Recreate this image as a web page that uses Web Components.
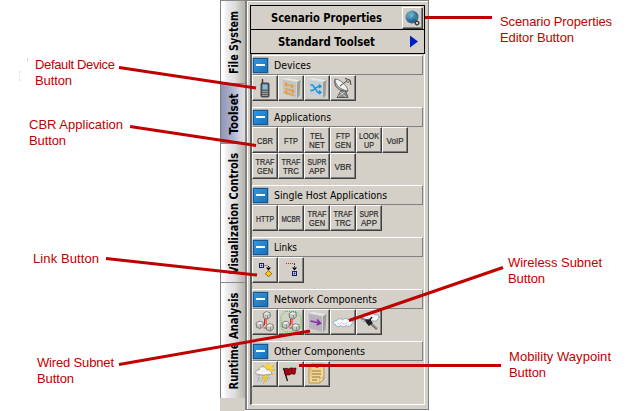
<!DOCTYPE html>
<html lang="en">
<head>
<meta charset="utf-8">
<title>Scenario toolset</title>
<style>
html,body{margin:0;background:#fff;width:641px;height:411px;overflow:hidden;font-family:"Liberation Sans",Arial,sans-serif}
</style>
</head>
<body>
<toolset-guide></toolset-guide>
<script>
const make = (name, render) => customElements.define(name, class extends HTMLElement {
  connectedCallback() {
    if (!this.shadowRoot) this.attachShadow({mode: 'open'}).innerHTML = render(this);
  }
});

// Text fitted to a measured run length
make('fit-text', e => {
  const w = +e.getAttribute('w'), s = e.getAttribute('size') || 11;
  return `<style>:host{display:block;width:${w}px;height:16px;flex:none}svg{display:block;overflow:visible}
  text{font:${e.getAttribute('weight') || 'normal'} ${s}px "DejaVu Sans Condensed","DejaVu Sans",sans-serif;font-stretch:condensed;fill:#000}</style>
  <svg width="${w}" height="16"><text y="12" textLength="${w}" lengthAdjust="spacingAndGlyphs">${e.getAttribute('text')}</text></svg>`;
});

const host = (x, y, k = 1) => `<g transform="translate(${x} ${y}) scale(${k})"><path d="M0 2.2L3 .2 7 1.2 7.400 5 4.800 7.600 .6 6.400Z" fill="#c4c4c1" stroke="#666" stroke-width=".8"/><path d="M.6 2.400L4.500 3.200 7 1.400 3.200.7Z" fill="#eee"/><path d="M4.500 3.200V7" stroke="#777" stroke-width=".7"/></g>`;
const cluster = `<path d="M14 10v4.500l2 2M12.500 10v6l-1.500 1M11.500 19h3" fill="none" stroke="#d22" stroke-width="1"/>${host(11,2.5)}${host(4,12)}${host(14,14.5)}`;
const box = (c, p) => `<path d="M4 4L8 2.500 22.500 5 21.500 20.500 18.500 24 4.500 19.500Z" fill="#9d9d9a"/><path d="M4 4L8 2.500 22.500 5 19 7Z" fill="#e6e6e3"/><path d="M4 4L18.500 7V23.500L4.500 19.500Z" fill="${c}" stroke="#e2e2df" stroke-width=".7"/>${p}`;
const cloud = (x, y) => `<path transform="translate(${x} ${y})" d="M3 6C0 5 0 2 4 2.300 5-.5 9 0 10 1.500 12-.7 15-.2 16 1.500 20 0 22 4 19 5.500 19 8 15 8 14 7 12 9 9 8.500 8 7 6 9 3 8 3 6Z" fill="#f8faff" stroke="#7f97bd" stroke-width=".8"/><path transform="translate(${x} ${y})" d="M5 5l2 1 2-2 3 2 3-2" fill="none" stroke="#b6c5df" stroke-width=".8"/>`;
const icons = {
  phone: `<path d="M10.500 4v5" stroke="#333" stroke-width="1.400"/><rect x="9" y="8" width="8" height="14" rx="1" fill="#5b6164" stroke="#2b2b2b" stroke-width=".8"/><rect x="10.500" y="9.500" width="5" height="5" fill="#7dbde0"/><path d="M10.500 16.500h5M10.500 18.500h5M10.500 20.500h5" stroke="#c8c8c8" stroke-width=".9" stroke-dasharray="1.200 .7"/>`,
  router: box('#c4c3be', `<path d="M7 9l8 2.500M9 7.500L7 9l2 2M7 13.500l9 3M14 14.500l2 2-2 1.500M7 17l9 3.500M9 15.500L7 17l2 2M13 9.500l2 2-2 1" fill="none" stroke="#f0962c" stroke-width="1.200"/>`),
  shuffle: box('#c5cfd4', `<path d="M6.500 10h2l5.500 7.500h3m-2-2l2 2-2 1.500M6.500 15.500h2l5.500-4h3m-2-2l2 2-2 1.500" fill="none" stroke="#1593de" stroke-width="1.400"/>`),
  dish: `<path d="M12 14L7 22.500h11l-3-8" fill="#8a8a88" stroke="#444" stroke-width=".8"/><path d="M8 21.500l7-5M10 17l6 5" stroke="#ddd" stroke-width=".8"/><path d="M5 4C3 11 9 17 18 16Z" fill="#bcbcb9" stroke="#444" stroke-width=".9"/><path d="M5 4C10 4 17 10 18 16 11 15 5 10 5 4Z" fill="#f1f1ef" stroke="#666" stroke-width=".8"/><path d="M10 11l8-6M15 3.500l5 1.500 1 5" fill="none" stroke="#444" stroke-width="1"/><circle cx="18" cy="6" r="1.400" fill="#eee" stroke="#444" stroke-width=".8"/>`,
  link: `<rect x="7.500" y="6.500" width="4" height="4" fill="#dfe5ff" stroke="#17225c"/><circle cx="9.500" cy="8.500" r=".9" fill="#1a2b77"/><path d="M12.500 8.500h4" stroke="#b22" stroke-dasharray="1 1"/><path d="M16.500 9v3" stroke="#222" stroke-dasharray="1 1"/><path d="M14 10.500h5l-2.500 3z"/><path d="M16.500 13.500l3.200 3.200-3.200 3.200-3.200-3.200z" fill="#ffc51d" stroke="#7a5200" stroke-width=".8"/>`,
  point: `<path d="M8 6.500h9" stroke="#b22" stroke-dasharray="1 1"/><path d="M16.500 7v4" stroke="#333" stroke-dasharray="1 1"/><path d="M14 10.500h5l-2.500 3z"/><rect x="14.500" y="14.500" width="4" height="4" fill="#cbd4ff" stroke="#17225c"/><circle cx="16.500" cy="16.500" r=".9" fill="#1a2b77"/>`,
  cluster,
  subnet: cluster + `<path d="M7 2.500h11l5 5v11l-4 4.500H7l-4-4V7z" fill="none" stroke="#22d52e" stroke-dasharray="1 1"/>`,
  wired: box('#b9b1bb', `<path d="M6.500 12l9 2M13 10.500l3.500 3.700-4 1.800" fill="none" stroke="#8130a3" stroke-width="1.600"/>`),
  cloud: cloud(2.500, 9.500),
  satellite: cloud(2.500, 4.500) + `<path d="M3.500 7.500l8 5M14 14l7 6" stroke="#77756f" stroke-width="2.400"/><path d="M3.500 7l7 4M15 14l6 5" stroke="#b2b0aa" stroke-width=".8"/><path d="M10 11l4 0 2 3-3 2-2-2zM16 8l-3 4M13 15v2" fill="#222" stroke="#222" stroke-width="1.300"/>`,
  weather: `<path d="M16 2v3M10 4l2 2M22 4l-2 2M23 9h-3M21 14l-2-2" stroke="#efb324" stroke-width="1.400"/><circle cx="16" cy="8" r="4.500" fill="#ffd432"/><path d="M6 14c-4-1-2-6 1-5 1-5 7-4 8 0 5-1 6 5 2 5Z" fill="#f6f6f6" stroke="#888" stroke-width=".7"/><path d="M5 13q6 3 13 0" stroke="#aaa" fill="none"/><path d="M6 16l2 5M8 16l-3 5M11 16l-2 5M16 16l-2 5M18 16l-1 3" stroke="#8aa7dc" stroke-dasharray="1.500 1"/><path d="M13 14l-3 4h3l-2 5 5-6h-3l3-3z" fill="#ffd51b" stroke="#d2a120" stroke-width=".4"/>`,
  flag: `<path d="M5.500 7l4 13" stroke="#111" stroke-width="1.300"/><path d="M6 8c3-2 4 1 6-.8 2-1 3 .8 6-.2l-1 6c-2 1-3-1-4 0-2 2-3 0-5.500 1.500z" fill="#b40012" stroke="#320006" stroke-width=".7"/><path d="M10 8v5M14 7v6" stroke="#590008"/>`,
  note: `<path d="M7 3h13v15l-4 4H5V6z" fill="#f2d894" stroke="#a88647" stroke-width=".8"/><path d="M20 17h-4v5z" fill="#fff1bd" stroke="#a88647" stroke-width=".6"/><path d="M8 10h9M8 13h9M8 16h8M8 19h5" stroke="#8e7441"/><path d="M5.500 6l2-2.500v15" fill="#ddb868"/><circle cx="13" cy="5.500" r="1.800" fill="#777"/>`
};

const labelWidths = {CBR: 16, FTP: 14, VoIP: 17, LOOK: 20, UP: 10, SUPR: 19, TRAF: 19, VBR: 17, HTTP: 18, MCBR: 19, TEL: 14};

make('tool-button', e => {
  const label = e.getAttribute('label'), icon = e.getAttribute('icon');
  let art = icon ? icons[icon] : '';
  if (label) {
    const rows = label.split(' ');
    art = rows.map((r, i) => `<text x="13" y="${rows.length > 1 ? 11.500 + i * 9.300 : 16.500}" text-anchor="middle" textLength="${labelWidths[r] || 16}" lengthAdjust="spacingAndGlyphs">${r}</text>`).join('');
  }
  return `<style>:host{display:block;box-sizing:border-box;width:26px;height:26px;background:#d4d0c8;border:solid;border-width:1px;border-color:#fff #404040 #404040 #fff;box-shadow:inset -1px -1px #808080}
  svg{display:block;margin:-1px;overflow:visible}text{font:8.800px "Liberation Sans",Arial,sans-serif;fill:#2c2c2c;stroke:#2c2c2c;stroke-width:.2px}</style><svg width="26" height="26">${art}</svg>`;
});

make('tool-section', e => `<style>:host{display:block;margin-bottom:6px}
  header{box-sizing:border-box;width:171px;height:20px;display:flex;align-items:center;border:solid #808080;border-width:1px;border-top-color:#fff;border-left-color:#fff;gap:6px}
  i{width:15px;height:15px;box-sizing:border-box;background:linear-gradient(135deg,#3395dc,#1672bd);border:1px solid #1a568c;display:grid;place-items:center;box-shadow:0 0 0 .5px #7193ac}
  i:after{content:"";width:9px;height:2px;background:#fff}
  div{display:grid;grid-template-columns:repeat(6,26px);width:156px}</style>
  <header><i></i><fit-text text="${e.getAttribute('title-text')}" w="${e.getAttribute('w')}"></fit-text></header><div><slot></slot></div>`);

make('rail-tab', e => {
  const h = +e.getAttribute('h'), s = +e.getAttribute('start'), w = +e.getAttribute('len');
  const on = e.hasAttribute('on');
  return `<style>:host{display:block;box-sizing:border-box;height:${h}px;border-left:1px solid #808080;border-top:1px solid #8b8984;
  background:${on ? 'linear-gradient(90deg,#8f95b3,#a5aac8 35%,#b9bdd9 60%,#d5d5df 80%,#dedddb)' : 'linear-gradient(90deg,#fff 0 12%,#f1f1f1 20%,#e3e3ea 42%,#dedede 58%,#d0cec9 72%,#b6b3ac)'}}
  svg{display:block;overflow:visible}text{font:bold 11.500px "DejaVu Sans Condensed","DejaVu Sans",sans-serif;font-stretch:condensed}</style>
  <svg width="24" height="${h - 1}"><text transform="translate(16.500 ${s}) rotate(-90)" textLength="${w}" lengthAdjust="spacingAndGlyphs">${e.getAttribute('text')}</text></svg>`;
});

make('tab-rail', () => `<style>:host{display:flex;flex-direction:column;width:25px;height:411px;background:#d4d0c8}</style>
  <rail-tab text="File System" h="83" start="73" len="63"></rail-tab>
  <rail-tab on text="Toolset" h="60" start="50.500" len="41"></rail-tab>
  <rail-tab text="Visualization Controls" h="139" start="130" len="121"></rail-tab>
  <rail-tab text="Runtime Analysis" h="116" start="106.500" len="97"></rail-tab>`);

make('panel-bar', e => `<style>:host{box-sizing:border-box;width:175px;height:25px;border:1px solid #000;display:grid;grid-template-columns:1fr 22px;align-items:center;padding-left:20px;margin-bottom:-1px;background:#d4d0c8}
  fit-text{justify-self:start;margin-left:${e.getAttribute('inset')}px}</style><fit-text weight="bold" size="11.500" text="${e.getAttribute('text')}" w="${e.getAttribute('w')}"></fit-text><slot></slot>`);

make('globe-button', () => `<style>:host{display:block;box-sizing:border-box;width:21px;height:22px;border:1px solid;border-color:#fff #404040 #404040 #fff;box-shadow:inset -1px -1px #808080}svg{display:block}</style>
  <svg width="19" height="20"><defs><radialGradient id="g" cx=".35" cy=".3"><stop stop-color="#b5e2f3"/><stop offset=".6" stop-color="#4b93c4"/><stop offset="1" stop-color="#2b6697"/></radialGradient></defs><circle cx="9" cy="9" r="6.500" fill="url(#g)"/><path d="M4 5q4-3 6 0l-2 3-1 3q-4-3-3-6M11 6l4 2-1 4-3-2z" fill="#4d8f86" opacity=".6"/><circle cx="14" cy="15" r="1.600" fill="#ddd" stroke="#333"/><path d="M14 12.300v1M14 16.800v1M11.300 15h1M15.800 15h1M12 13l.7.7M16 13l-.7.7M12 17l.7-.7M16 17l-.7-.7" stroke="#333"/></svg>`);

make('tool-panel', () => {
  const tools = list => list.map(t => `<tool-button label="${t}"></tool-button>`).join('');
  const pics = list => list.map(t => `<tool-button icon="${t}"></tool-button>`).join('');
  return `<style>:host{display:block;box-sizing:border-box;width:184px;height:410px;background:#d4d0c8;border:solid #808080;border-width:1px 1px 1px 2px;padding:4px 0 0 3px;box-shadow:inset 1px 1px #fff}
  section{box-sizing:border-box;width:175px;height:351px;border-left:2px solid #606060;border-right:1px solid #fff;border-bottom:1px solid #fff;padding-top:1px;margin-top:1px}
  .arrow{width:8px;height:12px;background:#001fc0;clip-path:polygon(0 0,100% 50%,0 100%);margin-left:8px}</style>
  <panel-bar text="Scenario Properties" w="111" inset="0"><globe-button></globe-button></panel-bar>
  <panel-bar text="Standard Toolset" w="97" inset="7"><div class="arrow"></div></panel-bar>
  <section>
  <tool-section title-text="Devices" w="37">${pics(['phone','router','shuffle','dish'])}</tool-section>
  <tool-section title-text="Applications" w="57">${tools(['CBR','FTP','TEL NET','FTP GEN','LOOK UP','VoIP','TRAF GEN','TRAF TRC','SUPR APP','VBR'])}</tool-section>
  <tool-section title-text="Single Host Applications" w="113">${tools(['HTTP','MCBR','TRAF GEN','TRAF TRC','SUPR APP'])}</tool-section>
  <tool-section title-text="Links" w="23">${pics(['link','point'])}</tool-section>
  <tool-section title-text="Network Components" w="103">${pics(['cluster','subnet','wired','cloud','satellite'])}</tool-section>
  <tool-section title-text="Other Components" w="91">${pics(['weather','flag','note'])}</tool-section>
  </section>`;
});

// Annotation text and leader lines placed over the free canvas
make('callout-layer', () => {
  const notes = [
    [35,69,'Default Device',80],[35,85,'Button',37],[29,129,'CBR Application',94],[29,145,'Button',37],
    [33,263,'Link Button',66],[37,367,'Wired Subnet',77],[37,383,'Button',37],
    [500,26,'Scenario Properties',112],[500,42,'Editor Button',74],
    [508,267,'Wireless Subnet',94],[508,283,'Button',37],[509,361,'Mobility Waypoint',102],[509,377,'Button',37]];
  const lines = [[119,67.500,256,88],[130,126.500,256,145.500],[106,258.500,257,275],[119,364.500,310,331],[425,17.500,492,17.500],[349,320.500,503,267.500],[299,365.500,501,365.500]];
  return `<style>:host{position:absolute;inset:0;width:641px;height:411px}svg{display:block}text{font:13px "Liberation Sans",Arial,sans-serif;fill:#c00000}line{stroke:#c00000;stroke-width:3}</style>
  <svg width="641" height="411"><path d="M27.500 58v3M19.500 71v2M19.500 75v1M19.500 79v2" stroke="#efc9ec"/>${lines.map(l => `<line x1="${l[0]}" y1="${l[1]}" x2="${l[2]}" y2="${l[3]}"/>`).join('')}${notes.map(n => `<text x="${n[0]}" y="${n[1]}" textLength="${n[3]}" lengthAdjust="spacing">${n[2]}</text>`).join('')}</svg>`;
});

make('toolset-guide', () => `<style>:host{display:flex;box-sizing:border-box;position:relative;width:641px;height:411px;padding-left:220px}</style><tab-rail></tab-rail><tool-panel></tool-panel><callout-layer></callout-layer>`);
</script>
</body>
</html>
